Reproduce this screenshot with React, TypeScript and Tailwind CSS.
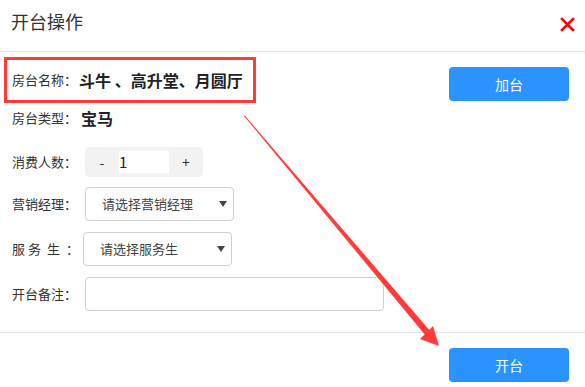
import React from 'react';

const font = { fontFamily: '"Noto Sans CJK SC", "Noto Sans", sans-serif' };

const Caret = () => (
  <svg width="8" height="6" viewBox="0 0 8 6" className="absolute right-[6px] top-1/2 -translate-y-1/2">
    <path d="M0 0 L8 0 L4 6 Z" fill="#444" />
  </svg>
);

const Select = ({ text, w }: { text: string; w: string }) => (
  <div className={`relative h-[34px] ${w} rounded-[4px] border border-[#cfcfcf] bg-white flex items-center pl-4 text-[13px] text-[#444]`}>
    {text}
    <Caret />
  </div>
);

export default function App() {
  return (
    <div className="relative w-[585px] h-[387px] bg-white overflow-hidden text-[#333]" style={font}>
      {/* 头部 */}
      <div className="h-[52px] border-b border-[#e6e6e6] flex items-start justify-between pl-[11px] pr-[10px]">
        <div className="pt-[10px] text-[18px] leading-[22px] text-[#333]">开台操作</div>
        <svg width="15" height="15" viewBox="0 0 15 15" className="mt-[17px]">
          <path d="M2 2 L13 13 M13 2 L2 13" stroke="#ff0000" strokeWidth="2.6" strokeLinecap="square" />
        </svg>
      </div>

      {/* 表单 */}
      <div className="h-[280px] flex flex-col">
        <div className="flex items-start mt-[5px]">
          <div className="ml-[4px] w-[252px] h-[46px] border-[3px] border-[#ff3a3a] flex items-center pl-[5px]">
            <span className="text-[13px]">房台名称：</span>
            <span className="ml-[2px] text-[16px] font-bold text-[#222]">斗牛 、高升堂、月圆厅</span>
          </div>
          <button className="ml-auto mr-4 mt-[10px] w-[120px] h-[34px] rounded-[4px] bg-[#2b93ff] text-white text-[14px]">加台</button>
        </div>

        <div className="h-[30px] flex items-center pl-3">
          <span className="text-[13px]">房台类型：</span>
          <span className="ml-[4px] text-[16px] font-bold text-[#222]">宝马</span>
        </div>

        <div className="mt-[14px] h-[30px] flex items-center pl-3">
          <span className="w-[73px] text-[13px]">消费人数：</span>
          <div className="w-[118px] h-[30px] rounded-[5px] bg-[#f2f2f2] flex items-center text-[14px]">
            <span className="w-[34px] text-center text-[#333]">-</span>
            <div className="w-[50px] h-[22px] bg-white flex items-center text-[15px] text-[#222]">1</div>
            <span className="w-[34px] text-center text-[#333]">+</span>
          </div>
        </div>

        <div className="mt-[10px] flex items-center pl-3">
          <span className="w-[73px] text-[13px]">营销经理：</span>
          <Select text="请选择营销经理" w="w-[149px]" />
        </div>

        <div className="mt-[11px] flex items-center pl-3">
          <span className="w-[71px] text-[13px] flex">
            <span className="mr-[3px]">服</span>
            <span className="mr-[6px]">务</span>
            <span className="mr-[6px]">生</span>
            <span>：</span>
          </span>
          <Select text="请选择服务生" w="w-[149px]" />
        </div>

        <div className="mt-[11px] flex items-center pl-3">
          <span className="w-[73px] text-[13px]">开台备注：</span>
          <div className="w-[299px] h-[34px] rounded-[4px] border border-[#cfcfcf] bg-white" />
        </div>
      </div>

      {/* 底部 */}
      <div className="border-t border-[#e3e3e3] flex justify-end pr-4 pt-[15px]">
        <button className="w-[120px] h-[34px] rounded-[4px] bg-[#2b93ff] text-white text-[14px]">开台</button>
      </div>

      {/* 标注箭头 */}
      <svg className="absolute left-0 top-0 pointer-events-none" width="585" height="387" viewBox="0 0 585 387">
        <path d="M244 116 L244.8 115.6 L431 332 L426 336 Z" fill="#ff3b3b" />
        <path d="M439 346 L420 339 L433 326 Z" fill="#ff3b3b" />
      </svg>
    </div>
  );
}
